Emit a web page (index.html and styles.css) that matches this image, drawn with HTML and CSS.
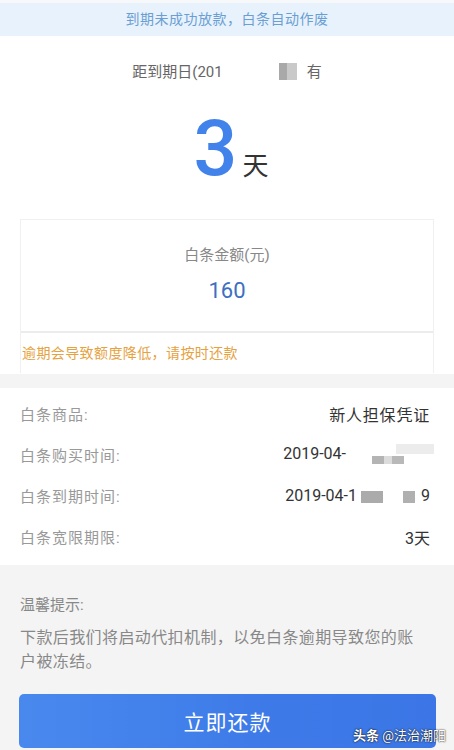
FILE: index.html
```html
<!DOCTYPE html>
<html lang="zh-CN">
<head>
    <meta charset="utf-8">
    <title>白条详情</title>
    <meta name="viewport" content="width=device-width, initial-scale=1">
    <link rel="stylesheet" href="styles.css">
</head>
<body>
<div class="page">
    <div class="notice">到期未成功放款，白条自动作废</div>

    <section class="countdown">
        <p class="caption">距到期日(201<span class="mask mask-date"></span>有</p>
        <div class="days"><span class="num">3</span><span class="unit">天</span></div>

        <div class="card">
            <div class="amount">
                <div class="amount-label">白条金额(元)</div>
                <div class="amount-value">160</div>
            </div>
            <div class="warn">逾期会导致额度降低，请按时还款</div>
        </div>
    </section>

    <section class="details">
        <div class="row">
            <span class="label">白条商品:</span>
            <span class="value">新人担保凭证</span>
        </div>
        <div class="row">
            <span class="label">白条购买时间:</span>
            <span class="value date">2019-04-<span class="mask mask-buy"></span></span>
        </div>
        <div class="row">
            <span class="label">白条到期时间:</span>
            <span class="value date">2019-04-1<span class="mask mask-due"></span>9</span>
        </div>
        <div class="row">
            <span class="label">白条宽限期限:</span>
            <span class="value date">3天</span>
        </div>
    </section>

    <section class="tips">
        <h2>温馨提示:</h2>
        <p>下款后我们将启动代扣机制，以免白条逾期导致您的账户被冻结。</p>
        <button type="button" class="pay">立即还款</button>
    </section>

    <div class="watermark"><b>头条</b> @法治潮阳</div>
</div>
</body>
</html>
```

FILE: styles.css
```css
:root {
    --blue: #4183ea;
    --notice-bg: #e7f2fc;
    --notice-text: #6b9fd3;
    --grey-bg: #f4f4f4;
    --line: #f0f0f0;
    --text: #333;
    --muted: #999;
    --orange: #e6a23f;
}

html {
    box-sizing: border-box;
}

*, *:before, *:after {
    box-sizing: inherit;
}

body {
    margin: 0;
    font-family: Roboto, "Noto Sans CJK SC", sans-serif;
    background-color: var(--grey-bg);
    color: var(--text);
}

.page {
    position: relative;
    width: 454px;
    height: 750px;
    overflow: hidden;
    border-top: 3px solid #f7f8f9;
}

.notice {
    height: 33px;
    line-height: 33px;
    background-color: var(--notice-bg);
    color: var(--notice-text);
    font-size: 14px;
    letter-spacing: 0.5px;
    text-align: center;
}

.countdown {
    background-color: #fff;
    padding-top: 26px;
    height: 338px;
}

.caption {
    margin: 0;
    height: 20px;
    line-height: 20px;
    font-size: 15px;
    color: #666;
    text-align: center;
}

.mask {
    display: inline-block;
    vertical-align: middle;
}

.mask-date {
    width: 84px;
    height: 17px;
    margin-top: -3px;
    background: linear-gradient(90deg, transparent 0 56px, #a9a9a9 56px 64px, #c9c9c9 64px 74px, transparent 74px);
}

.days {
    margin-top: 27px;
    height: 80px;
    line-height: 80px;
    text-align: center;
    padding-left: 8px;
}

.num {
    font-size: 77px;
    font-weight: 500;
    color: var(--blue);
}

.unit {
    font-size: 26px;
    color: #333;
    margin-left: 5px;
}

.card {
    margin: 30px 20px 0;
    border: 1px solid var(--line);
    border-bottom: none;
}

.amount {
    height: 113px;
    padding-top: 24px;
    text-align: center;
    border-bottom: 2px solid #ececec;
}

.amount-label {
    font-size: 15px;
    line-height: 22px;
    color: #888;
}

.amount-value {
    margin-top: 12px;
    font-size: 22px;
    line-height: 26px;
    color: #3c6fc2;
}

.warn {
    height: 40px;
    line-height: 40px;
    padding-left: 1px;
    font-size: 14px;
    letter-spacing: 0.4px;
    color: var(--orange);
}

.details {
    margin-top: 14px;
    background-color: #fff;
    padding: 5px 24px 8px 20px;
}

.row {
    display: flex;
    justify-content: space-between;
    align-items: center;
    height: 41px;
}

.label {
    font-size: 15px;
    letter-spacing: 1px;
    color: var(--muted);
}

.value {
    font-size: 16px;
    letter-spacing: 0.8px;
    color: var(--text);
}

.value.date {
    letter-spacing: 0;
}

.mask-buy {
    width: 88px;
    height: 22px;
    margin-right: -4px;
    background:
        linear-gradient(90deg, transparent 0 26px, #b4b4b4 26px 38px, #dcdcdc 38px 46px, #b9b9b9 46px 58px, transparent 58px) 0 12px / 100% 8px no-repeat,
        linear-gradient(90deg, transparent 0 50px, #ececec 50px 88px) 0 0 / 100% 10px no-repeat;
}

.mask-due {
    width: 64px;
    height: 12px;
    background: linear-gradient(90deg, transparent 0 4px, #ababab 4px 26px, transparent 26px 46px, #b0b0b0 46px 58px, transparent 58px);
}

.tips {
    padding: 28px 18px 0 19px;
}

.tips h2 {
    margin: 0;
    font-size: 15px;
    font-weight: normal;
    line-height: 24px;
    color: #888;
    padding-left: 1px;
}

.tips p {
    margin: 9px 16px 0 0;
    font-size: 16px;
    line-height: 24px;
    letter-spacing: 0.4px;
    color: #888;
    padding-left: 1px;
}

.pay {
    display: block;
    width: 100%;
    margin-top: 20px;
    height: 54px;
    border: none;
    border-radius: 5px;
    background: linear-gradient(90deg, #4989ee, #3d7ae8 60%, #3c76e6);
    color: #fff;
    font-family: inherit;
    font-size: 21px;
    letter-spacing: 1px;
    cursor: pointer;
}

.watermark {
    position: absolute;
    right: 8px;
    bottom: 6px;
    font-size: 13px;
    color: #fff;
    text-shadow: 0 0 2px rgba(0, 0, 0, 0.8), 0 0 1px rgba(0, 0, 0, 0.8);
}
```
